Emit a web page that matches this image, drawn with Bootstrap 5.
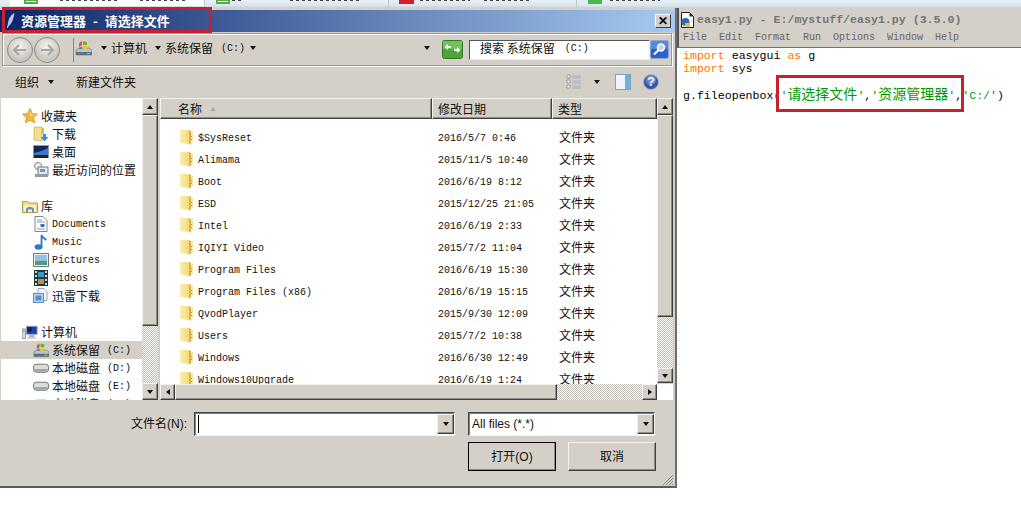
<!DOCTYPE html>
<html lang="zh">
<head>
<meta charset="utf-8">
<title>资源管理器</title>
<link href="https://cdn.jsdelivr.net/npm/bootstrap@5.3.0/dist/css/bootstrap.min.css" rel="stylesheet">
<style>
html,body{margin:0;padding:0;background:#fff;}
body{font:12px/1 "Noto Sans CJK SC","Liberation Sans",sans-serif;color:#111;}
.stage{width:1021px;height:506px;position:relative;overflow:hidden;background:#fff;}
.ltn{font:10px/1 "Liberation Mono",monospace;}
.sans{font-family:"Liberation Sans","Noto Sans CJK SC",sans-serif;}
.strip{height:8px;background:linear-gradient(#e6f0f8,#dbe8f2 65%,#c9d0d4);overflow:hidden;position:relative;}
.tabw{position:absolute;left:10px;top:0;width:194px;height:6px;background:#fff;}
.stripico{position:absolute;top:-1px;height:5px;width:14px;border:2px solid #5aa84a;background:#fff;}
.stripred{border-color:#d21f2a;background:#d21f2a;}
.stripbar{position:absolute;top:0;height:1px;background:repeating-linear-gradient(90deg,#444 0 3px,transparent 3px 6px);}
.stripdiv{position:absolute;top:0;width:1px;height:7px;background:#b8c8d4;}
.desk{height:498px;}
.dlg{width:677px;height:480px;background:#d4d0c8;border-right:2px solid #6e6e6e;border-bottom:2px solid #5c5c5c;padding-top:2px;flex:none;}
.tbar{height:22px;background:linear-gradient(90deg,#0a246a,#a6caf0);color:#fff;font-weight:700;font-size:13px;padding-left:7px;}
.tbar .ttl{margin-left:6px;padding-bottom:2px;}
.tbar .dash{margin:0 7px;}
.xbtn{width:16px;height:14px;margin-right:4px;margin-left:auto;background:#d4d0c8;border:1px solid;border-color:#fff #404040 #404040 #fff;color:#000;font:700 12px/12px "Liberation Sans",sans-serif;text-align:center;}
.navb{height:33px;margin:1px 3px 0 2px;border:1px solid #9a9a94;box-shadow:inset 1px 1px #fff,1px 1px #fff;padding:0 2px 0 4px;}
.cir{width:26px;height:26px;border-radius:50%;border:1px solid #8a8a8a;background:radial-gradient(circle at 50% 35%,#f3f3f0,#c6c4bd 70%,#e0ded8);margin-right:1px;display:flex;align-items:center;justify-content:center;}
.tri{display:inline-block;width:0;height:0;border-left:3.5px solid transparent;border-right:3.5px solid transparent;border-top:4px solid #111;}
.addr{width:361px;border-left:1px solid #888;height:24px;margin-left:12px;padding:0 0 3px 1px;}
.addr .ltn,.searchbx .ltn{margin-top:2px;}
.searchbx{width:181px;height:20px;background:#fff;border:1px solid;border-color:#555 #eee #eee #555;padding:0 0 3px 10px;margin-left:6px;}
.tools{height:32px;padding-left:15px;padding-right:16px;}
.panes{height:302px;}
.tree{width:141px;margin-left:1px;background:#fff;overflow:hidden;padding-top:9px;flex:none;border:0;border-radius:0;}
.tree .list-group-item{height:18px;border:0;padding:0;background:transparent;display:flex;align-items:center;flex:none;color:#111;border-radius:0;}
.tree .lvl1{padding-left:21px;gap:3px;}
.tree .lvl2{padding-left:32px;gap:3px;}
.tree .sel{background:#d4d0c8;}
.tree .blank{height:18px;flex:none;}
.tree .ltn{margin-top:2px;}
.sbv{width:16px;flex:none;}
.bev{background:#d4d0c8;border:1px solid;border-color:#f4f2ee #404040 #404040 #f4f2ee;box-shadow:inset -1px -1px #8e8c86;flex:none;}
.sbtn{height:17px;display:flex;align-items:center;justify-content:center;}
.sbh .sbtn{width:15px;height:16px;}
.hatch{background:repeating-conic-gradient(#c8c5be 0 25%,#f2f1ee 0 50%) 0 0/2px 2px;}
.up{transform:rotate(180deg);}
.lft{transform:rotate(90deg);}
.rgt{transform:rotate(-90deg);}
.listc{width:497px;flex:none;margin-left:2px;}
.thead2{height:21px;}
.thc{height:21px;padding-left:5px;display:flex;align-items:center;font-size:12px;}
.fbody{height:265px;background:#fff;overflow:hidden;padding-top:7px;}
.ftab{table-layout:fixed;width:496px;margin:0;background:transparent;--bs-table-bg:transparent;}
.ftab td{height:22px;padding:0;border:0;vertical-align:middle;color:#111;white-space:nowrap;overflow:hidden;}
.ftab td.c1{padding-left:20px;}
.ftab td.c2{padding:4px 0 0 6px;}
.ftab td.c3{padding-left:7px;}
.ftab .nm{display:flex;align-items:center;gap:5px;}
.ftab .nm .ltn{margin-top:4px;}
.sbh{height:16px;}
.corner{height:16px;background:#fff;margin-top:1px;}
.bottomz{padding-top:12px;flex:1 1 auto;position:relative;}
.bow{height:24px;}
.lbl{width:187px;text-align:right;}
.combo{height:24px;background:#fff;border:1px solid;border-color:#444 #f4f2ee #f4f2ee #444;box-shadow:inset 1px 1px #808080;padding:1px 0 1px 2px;}
.caretl{width:1px;height:18px;background:#000;margin-left:1px;}
.combo .bev{width:17px;height:20px;display:flex;align-items:center;justify-content:center;}
.combotxt{padding-left:1px;}
.ok,.cancel{width:88px;height:29px;padding:0;border-radius:0;background:#d4d0c8;color:#111;font-size:12px;border:1px solid;border-color:#f4f2ee #404040 #404040 #f4f2ee;box-shadow:inset -1px -1px #8e8c86;}
.ok{outline:1px solid #000;outline-offset:-1px;}
.grip{position:absolute;right:1px;bottom:0;}
.idle{flex:1 1 auto;height:498px;background:#fff;}
.idle .ittl{height:24px;background:#d4d0c8;border-left:2px solid #555;font:700 11.6px/1 "Liberation Mono",monospace;color:#757575;padding-left:1px;gap:2px;flex:none;}
.idle .imenu{height:16px;background:#d4d0c8;border-left:2px solid #555;border-bottom:1px solid #777;color:#666;font:10px/1 "Liberation Mono",monospace;padding:0 0 3px 4px;flex:none;}
.imenu span{display:inline-block;}
.code{padding:1px 0 0 6px;font:11.6px/13px "Liberation Mono",monospace;color:#000;}
.code .ln{height:13px;white-space:pre;}
.code .ln3{margin-top:12px;}
.code .kw{color:#f70;}
.code .st{color:#090;}
.code .cj{font:14px/13px "Noto Sans CJK SC",sans-serif;color:#090;}
.redbox{position:absolute;border:3px solid #c9202c;pointer-events:none;}
</style>
</head>
<body>
<svg width="0" height="0" class="position-absolute">
<defs>
<linearGradient id="fg" x1="0" x2="1"><stop offset="0" stop-color="#f9edb2"/><stop offset="1" stop-color="#f3db7c"/></linearGradient>
<symbol id="i-folder" viewBox="0 0 13 16"><path d="M0 1h9v14l-9-1z" fill="url(#fg)"/><path d="M9 1l2 1v12l-2 2z" fill="#d6b347"/><path d="M11 3l2-1v11l-2 1z" fill="#f6e6a0"/><path d="M11 7h1v1h-1zM11 10h1v1h-1z" fill="#7aa66f"/></symbol>
<symbol id="i-star" viewBox="0 0 16 16"><path d="M8 .5l2.300 5 5.200.6-3.900 3.500 1.100 5.400L8 12.200 3.300 15l1.100-5.400L.5 6.100l5.200-.6z" fill="#f7b733" stroke="#c98a3a" stroke-width=".7"/><path d="M8 3l1.600 3.600L13 7l-5 1z" fill="#fde59a"/></symbol>
<symbol id="i-dl" viewBox="0 0 16 16"><path d="M1 1h8v14l-8-1z" fill="#f3df8f" stroke="#c6a645" stroke-width=".6"/><path d="M9 2h2v6H9z" fill="#dbb94e"/><path d="M10 8h3v3h2.500l-4 4.500-4-4.500H10z" fill="#3a8ed8"/></symbol>
<symbol id="i-desk" viewBox="0 0 16 14"><rect x=".5" y=".5" width="15" height="12" fill="#0f2a5a" stroke="#8a9bb0"/><path d="M1 8q7-1 14-5v7H1z" fill="#3c79c8"/><rect x="1" y="10" width="14" height="3" fill="#222"/></symbol>
<symbol id="i-rec" viewBox="0 0 16 16"><circle cx="5" cy="4" r="3.500" fill="#eee" stroke="#888"/><rect x="5" y="5" width="10" height="8" fill="#dfe6ee" stroke="#6b7a88"/><rect x="7" y="7" width="5" height="3" fill="#6f96c4"/><rect x="2" y="12" width="13" height="3" fill="#999"/></symbol>
<symbol id="i-lib" viewBox="0 0 16 14"><path d="M.5 2.500h5l1 1.500h9v9.500H.5z" fill="#f0db8e" stroke="#b89c4c"/><path d="M2 6h12v7H2z" fill="#fbf1c4"/><path d="M4 13V9.500Q8 6 12 9.500V13h-2v-2.500H6V13z" fill="#5b96c8"/></symbol>
<symbol id="i-doc" viewBox="0 0 13 16"><path d="M.5.500h8l4 4v11H.5z" fill="#fff" stroke="#7a8794"/><path d="M2.500 4h5M2.500 6h8M2.500 13h8" stroke="#8a99a8"/><rect x="6" y="8" width="4" height="3" fill="#3a6ea8"/></symbol>
<symbol id="i-mus" viewBox="0 0 14 16"><ellipse cx="4.500" cy="13" rx="4" ry="2.700" fill="#2f7ac8"/><path d="M7.500 13V1q1 3 5 5" stroke="#2f7ac8" stroke-width="1.800" fill="none"/></symbol>
<symbol id="i-pic" viewBox="0 0 16 14"><rect x=".5" y=".5" width="15" height="13" fill="#eee" stroke="#6f7a84"/><rect x="2" y="2" width="12" height="6" fill="#8fc2e8"/><path d="M2 8h12v4H2z" fill="#4f9a72"/></symbol>
<symbol id="i-vid" viewBox="0 0 14 16"><rect width="14" height="16" fill="#1d3b3f"/><path d="M1 1h2v2H1zM1 5h2v2H1zM1 9h2v2H1zM1 13h2v2H1zM11 1h2v2h-2zM11 5h2v2h-2zM11 9h2v2h-2zM11 13h2v2h-2z" fill="#cfd8d8"/><rect x="4" y="2" width="6" height="5" fill="#3b9ac8"/><rect x="4" y="9" width="6" height="5" fill="#d08a3c"/></symbol>
<symbol id="i-xl" viewBox="0 0 16 16"><path d="M5 .5h6l3 3v9H5z" fill="#f2f6fb" stroke="#8eaac8"/><rect x=".5" y="5.500" width="10" height="9" fill="#bcd6ee" stroke="#5d8cb8"/><rect x="2.500" y="7.500" width="6" height="5" fill="#4d92d0"/></symbol>
<symbol id="i-pc" viewBox="0 0 18 16"><rect x="5" y="1" width="12" height="9" fill="#1b3fa8" stroke="#9aa5b0"/><path d="M6 2h5v5H6z" fill="#0e1f6a"/><rect x="8" y="11" width="6" height="2" fill="#aab"/><rect x="6" y="13" width="10" height="2" fill="#ccd"/><rect x="0" y="4" width="4" height="11" fill="#d8dcd8" stroke="#555" stroke-width=".6"/><rect x="1" y="6" width="2" height="1" fill="#2a8a4a"/></symbol>
<symbol id="i-c" viewBox="0 0 17 16"><path d="M1 10l3-2h10l3 2v5H1z" fill="#b8c6cc" stroke="#5a6a70" stroke-width=".6"/><rect x="1" y="12" width="16" height="3" fill="#5a7480"/><rect x="12" y="13" width="3" height="1" fill="#6fe06f"/><path d="M4 3l3-2v4L4 7z" fill="#e8503a"/><path d="M8 1l4 1v3L8 5z" fill="#6ab52f"/><path d="M4 8l3-2v3H4z" fill="#3f8ee0"/><path d="M8 6l4 0v3H8z" fill="#f3c22b"/></symbol>
<symbol id="i-hdd" viewBox="0 0 17 10"><rect x=".5" y="1" width="16" height="8.500" rx="3" fill="#dcdedc" stroke="#6a6f72"/><rect x="1" y="6" width="15" height="3" rx="1.500" fill="#a4aaac"/><rect x="11" y="6" width="3" height="2" fill="#6ecb5a"/></symbol>
<symbol id="i-green" viewBox="0 0 21 19"><rect x=".5" y=".5" width="20" height="18" rx="2" fill="#4ea63a" stroke="#2f7a25"/><rect x="1" y="1" width="19" height="8" fill="#72c45a"/><path d="M9 6H6V4L2.500 7 6 10V8h3zM12 9h3V7l3.500 3-3.500 3v-2h-3z" fill="#fff"/></symbol>
<symbol id="i-search" viewBox="0 0 19 19"><rect x=".5" y=".5" width="18" height="18" rx="2" fill="#2f62c8" stroke="#8aa4d8"/><rect x="1" y="1" width="17" height="8" fill="#5a8ae0"/><circle cx="11" cy="7.500" r="3.500" fill="#bcd6f4" stroke="#fff" stroke-width="1.400"/><path d="M8.500 10L4 14.500" stroke="#fff" stroke-width="2"/></symbol>
<symbol id="i-view" viewBox="0 0 16 16"><path d="M1 1h3v3H1zM1 6h3v3H1zM1 11h3v3H1z" fill="#fff" stroke="#7a8a9c" stroke-width=".8"/><path d="M6 2h9M6 4h9M6 7h9M6 9h9M6 12h9M6 14h9" stroke="#a4b0bc"/></symbol>
<symbol id="i-panel" viewBox="0 0 16 16"><rect x=".5" y=".5" width="15" height="15" fill="#f0f6fb" stroke="#7fa3bd"/><rect x="10" y="1" width="5" height="14" fill="#6cb4de"/></symbol>
<symbol id="i-py" viewBox="0 0 15 16"><path d="M1.500.5h8l4 4v11h-12z" fill="#fff" stroke="#222"/><path d="M9.500.5v4h4z" fill="#222"/><circle cx="5.500" cy="10" r="4" fill="#2f6fa8"/><path d="M5 11h5v3a3 3 0 0 1-5 0z" fill="#e6c23c"/></symbol>
<symbol id="i-feather" viewBox="0 0 8 16"><path d="M7 .5Q2 3 1 12l-1 3 1.500-2Q6 9 7 .5z" fill="#b8c8e8" stroke="#e6eefc" stroke-width=".5"/></symbol>
</defs>
</svg>

<div class="stage">
  <div class="strip">
    <div class="tabw"></div>
    <div class="stripico" style="left:24px"></div>
    <div class="stripbar" style="left:60px;width:60px"></div>
    <div class="stripbar" style="left:140px;width:45px"></div>
    <div class="stripdiv" style="left:204px"></div>
    <div class="stripico" style="left:216px"></div>
    <div class="stripbar" style="left:232px;width:12px"></div>
    <div class="stripbar" style="left:290px;width:70px"></div>
    <div class="stripdiv" style="left:388px"></div>
    <div class="stripico stripred" style="left:399px;width:15px"></div>
    <div class="stripbar" style="left:420px;width:50px"></div>
    <div class="stripbar" style="left:484px;width:46px"></div>
    <div class="stripdiv" style="left:576px"></div>
    <div class="stripico" style="left:588px;border-color:#4cb848;background:#4cb848"></div>
    <div class="stripbar" style="left:610px;width:50px"></div>
  </div>

  <div class="desk d-flex">
    <div class="dlg d-flex flex-column">
      <div class="tbar d-flex align-items-center">
        <svg width="8" height="16"><use href="#i-feather"/></svg>
        <span class="ttl">资源管理器<span class="dash">-</span>请选择文件</span>
        <div class="xbtn">✕</div>
      </div>

      <div class="navb d-flex align-items-center">
        <div class="cir"><svg width="16" height="14" viewBox="0 0 16 14"><path d="M7 2L2 7l5 5M2 7h12" fill="none" stroke="#a8a6a0" stroke-width="2"/></svg></div>
        <div class="cir"><svg width="16" height="14" viewBox="0 0 16 14"><path d="M9 2l5 5-5 5M14 7H2" fill="none" stroke="#a8a6a0" stroke-width="2"/></svg></div>
        <div class="addr d-flex align-items-center">
          <svg width="17" height="16"><use href="#i-c"/></svg>
          <i class="tri" style="margin-left:9px"></i>
          <span class="ms-1">计算机</span>
          <i class="tri ms-2"></i>
          <span class="ms-1">系统保留</span><span class="ltn" style="margin-left:8px">(C:)</span>
          <i class="tri" style="margin-left:5px"></i>
          <i class="tri ms-auto me-1"></i>
        </div>
        <svg class="ms-2" width="21" height="19"><use href="#i-green"/></svg>
        <div class="searchbx d-flex align-items-center">搜索 系统保留<span class="ltn" style="margin-left:10px">(C:)</span></div>
        <svg class="ms-auto" width="19" height="19"><use href="#i-search"/></svg>
      </div>

      <div class="tools d-flex align-items-center">
        <span>组织</span><i class="tri" style="margin-left:9px"></i>
        <span style="margin-left:22px">新建文件夹</span>
        <svg class="ms-auto" width="16" height="16"><use href="#i-view"/></svg>
        <i class="tri" style="margin-left:12px"></i>
        <svg style="margin-left:15px" width="16" height="16"><use href="#i-panel"/></svg>
        <svg style="margin-left:12px" width="16" height="16" viewBox="0 0 16 16"><circle cx="8" cy="8" r="7.500" fill="#3a55a8" stroke="#a3aec4"/><circle cx="8" cy="6" r="5" fill="#6c86cf"/><text x="8" y="12" text-anchor="middle" font-family="Liberation Sans" font-weight="700" font-size="12" fill="#fff">?</text></svg>
      </div>

      <div class="panes d-flex">
        <div class="tree list-group">
          <div class="list-group-item lvl1"><svg width="16" height="16"><use href="#i-star"/></svg>收藏夹</div>
          <div class="list-group-item lvl2"><svg width="16" height="16"><use href="#i-dl"/></svg>下载</div>
          <div class="list-group-item lvl2"><svg width="16" height="14"><use href="#i-desk"/></svg>桌面</div>
          <div class="list-group-item lvl2"><svg width="16" height="16"><use href="#i-rec"/></svg>最近访问的位置</div>
          <div class="blank"></div>
          <div class="list-group-item lvl1"><svg width="16" height="14"><use href="#i-lib"/></svg>库</div>
          <div class="list-group-item lvl2"><svg width="16" height="16"><use href="#i-doc"/></svg><span class="ltn">Documents</span></div>
          <div class="list-group-item lvl2"><svg width="16" height="16"><use href="#i-mus"/></svg><span class="ltn">Music</span></div>
          <div class="list-group-item lvl2"><svg width="16" height="14"><use href="#i-pic"/></svg><span class="ltn">Pictures</span></div>
          <div class="list-group-item lvl2"><svg width="16" height="16"><use href="#i-vid"/></svg><span class="ltn">Videos</span></div>
          <div class="list-group-item lvl2"><svg width="16" height="16"><use href="#i-xl"/></svg>迅雷下载</div>
          <div class="blank"></div>
          <div class="list-group-item lvl1"><svg width="16" height="15"><use href="#i-pc"/></svg>计算机</div>
          <div class="list-group-item lvl2 sel"><svg width="16" height="16"><use href="#i-c"/></svg><span>系统保留</span><span class="ltn ms-1">(C:)</span></div>
          <div class="list-group-item lvl2"><svg width="16" height="10"><use href="#i-hdd"/></svg><span>本地磁盘</span><span class="ltn ms-1">(D:)</span></div>
          <div class="list-group-item lvl2"><svg width="16" height="10"><use href="#i-hdd"/></svg><span>本地磁盘</span><span class="ltn ms-1">(E:)</span></div>
          <div class="list-group-item lvl2"><svg width="16" height="10"><use href="#i-hdd"/></svg><span>本地磁盘</span><span class="ltn ms-1">(F:)</span></div>
        </div>
        <div class="sbv d-flex flex-column">
          <div class="bev sbtn"><i class="tri up"></i></div>
          <div class="bev flex-grow-0" style="height:211px"></div>
          <div class="hatch flex-grow-1"></div>
          <div class="bev sbtn"><i class="tri"></i></div>
        </div>
        <div class="listc d-flex flex-column">
          <div class="thead2 d-flex">
            <div class="bev thc" style="width:272px;padding-left:17px">名称<i class="tri up ms-2" style="border-top-color:#aaa"></i></div>
            <div class="bev thc" style="width:120px">修改日期</div>
            <div class="bev thc" style="width:105px">类型</div>
          </div>
          <div class="fbody">
            <table class="table table-borderless ftab">
              <colgroup><col style="width:272px"><col style="width:120px"><col style="width:104px"></colgroup>
              <tbody>
                <tr><td class="c1"><div class="nm"><svg width="13" height="16"><use href="#i-folder"/></svg><span class="ltn">$SysReset</span></div></td><td class="c2 ltn">2016/5/7 0:46</td><td class="c3">文件夹</td></tr>
                <tr><td class="c1"><div class="nm"><svg width="13" height="16"><use href="#i-folder"/></svg><span class="ltn">Alimama</span></div></td><td class="c2 ltn">2015/11/5 10:40</td><td class="c3">文件夹</td></tr>
                <tr><td class="c1"><div class="nm"><svg width="13" height="16"><use href="#i-folder"/></svg><span class="ltn">Boot</span></div></td><td class="c2 ltn">2016/6/19 8:12</td><td class="c3">文件夹</td></tr>
                <tr><td class="c1"><div class="nm"><svg width="13" height="16"><use href="#i-folder"/></svg><span class="ltn">ESD</span></div></td><td class="c2 ltn">2015/12/25 21:05</td><td class="c3">文件夹</td></tr>
                <tr><td class="c1"><div class="nm"><svg width="13" height="16"><use href="#i-folder"/></svg><span class="ltn">Intel</span></div></td><td class="c2 ltn">2016/6/19 2:33</td><td class="c3">文件夹</td></tr>
                <tr><td class="c1"><div class="nm"><svg width="13" height="16"><use href="#i-folder"/></svg><span class="ltn">IQIYI Video</span></div></td><td class="c2 ltn">2015/7/2 11:04</td><td class="c3">文件夹</td></tr>
                <tr><td class="c1"><div class="nm"><svg width="13" height="16"><use href="#i-folder"/></svg><span class="ltn">Program Files</span></div></td><td class="c2 ltn">2016/6/19 15:30</td><td class="c3">文件夹</td></tr>
                <tr><td class="c1"><div class="nm"><svg width="13" height="16"><use href="#i-folder"/></svg><span class="ltn">Program Files (x86)</span></div></td><td class="c2 ltn">2016/6/19 15:15</td><td class="c3">文件夹</td></tr>
                <tr><td class="c1"><div class="nm"><svg width="13" height="16"><use href="#i-folder"/></svg><span class="ltn">QvodPlayer</span></div></td><td class="c2 ltn">2015/9/30 12:09</td><td class="c3">文件夹</td></tr>
                <tr><td class="c1"><div class="nm"><svg width="13" height="16"><use href="#i-folder"/></svg><span class="ltn">Users</span></div></td><td class="c2 ltn">2015/7/2 10:38</td><td class="c3">文件夹</td></tr>
                <tr><td class="c1"><div class="nm"><svg width="13" height="16"><use href="#i-folder"/></svg><span class="ltn">Windows</span></div></td><td class="c2 ltn">2016/6/30 12:49</td><td class="c3">文件夹</td></tr>
                <tr><td class="c1"><div class="nm"><svg width="13" height="16"><use href="#i-folder"/></svg><span class="ltn">Windows10Upgrade</span></div></td><td class="c2 ltn">2016/6/19 1:24</td><td class="c3">文件夹</td></tr>
              </tbody>
            </table>
          </div>
          <div class="sbh d-flex">
            <div class="bev sbtn ms-0"><i class="tri lft"></i></div>
            <div class="bev" style="width:382px"></div>
            <div class="hatch flex-grow-1"></div>
            <div class="bev sbtn"><i class="tri rgt"></i></div>
          </div>
        </div>
        <div class="sbv d-flex flex-column">
          <div class="bev sbtn"><i class="tri up"></i></div>
          <div class="bev" style="height:202px"></div>
          <div class="hatch flex-grow-1"></div>
          <div class="bev sbtn" style="height:15px"><i class="tri"></i></div>
          <div class="corner"></div>
        </div>
      </div>

      <div class="bottomz">
        <div class="bow d-flex align-items-center">
          <div class="lbl sans">文件名(N):</div>
          <div class="combo d-flex align-items-center" style="width:261px;margin-left:7px">
            <i class="caretl"></i>
            <div class="flex-grow-1"></div>
            <div class="bev"><i class="tri"></i></div>
          </div>
          <div class="combo d-flex align-items-center" style="width:187px;margin-left:13px">
            <div class="flex-grow-1 sans combotxt">All files (*.*)</div>
            <div class="bev"><i class="tri"></i></div>
          </div>
        </div>
        <div class="d-flex" style="margin:6px 0 0 468px;gap:12px">
          <button type="button" class="btn ok sans">打开(O)</button>
          <button type="button" class="btn cancel sans">取消</button>
        </div>
        <svg class="grip" width="13" height="13"><path d="M12 2L2 12M12 5L5 12M12 8L8 12M12 11L11 12" stroke="#8e8c86" fill="none"/></svg>
      </div>
    </div>

    <div class="idle d-flex flex-column">
      <div class="ittl d-flex align-items-center"><svg width="15" height="16"><use href="#i-py"/></svg><span>easy1.py - E:/mystuff/easy1.py (3.5.0)</span></div>
      <div class="imenu d-flex align-items-center">
        <span style="width:36px">File</span><span style="width:36px">Edit</span><span style="width:48px">Format</span><span style="width:30px">Run</span><span style="width:54px">Options</span><span style="width:48px">Window</span><span>Help</span>
      </div>
      <div class="code">
        <div class="ln"><span class="kw">import</span> easygui <span class="kw">as</span> g</div>
        <div class="ln"><span class="kw">import</span> sys</div>
        <div class="ln ln3">g.fileopenbox(<span class="st">'</span><span class="cj">请选择文件</span><span class="st">'</span>,<span class="st">'</span><span class="cj">资源管理器</span><span class="st">'</span>,<span class="st">'C:/'</span>)</div>
      </div>
    </div>
  </div>

  <div class="redbox" style="left:2px;top:7px;width:210px;height:26px"></div>
  <div class="redbox" style="left:776px;top:75px;width:188px;height:37px"></div>
</div>
<script src="https://cdn.jsdelivr.net/npm/bootstrap@5.3.0/dist/js/bootstrap.bundle.min.js"></script>
</body>
</html>
